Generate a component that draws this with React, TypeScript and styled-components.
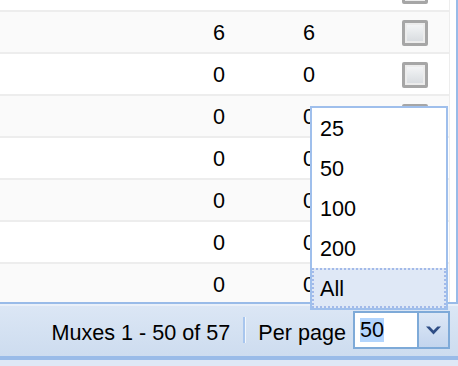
import React from 'react';
import styled, { createGlobalStyle } from 'styled-components';

const GlobalStyle = createGlobalStyle`
  html, body {
    margin: 0;
    padding: 0;
    background: #ffffff;
  }
  body {
    width: 458px;
    height: 366px;
    overflow: hidden;
    font-family: 'Liberation Sans', Arial, sans-serif;
    font-size: 21.6px;
    color: #000;
  }
`;

interface muxRowType {
  id: number;
  services: string;
  channels: string;
}

// first row is scrolled out of view, only its checkbox bottom shows
const rows: muxRowType[] = [
  { id: 0, services: '', channels: '' },
  { id: 1, services: '6', channels: '6' },
  { id: 2, services: '0', channels: '0' },
  { id: 3, services: '0', channels: '0' },
  { id: 4, services: '0', channels: '0' },
  { id: 5, services: '0', channels: '0' },
  { id: 6, services: '0', channels: '0' },
  { id: 7, services: '0', channels: '0' },
];

const pageSizes = ['25', '50', '100', '200', 'All'];

const App = () => {
  return (
    <>
      <GlobalStyle />
      <Page>
        <GridBody>
          <GridScroller>
            {rows.map((row, i) => (
              <Row key={row.id} $alt={i % 2 === 1}>
                <NumberCell>{row.services}</NumberCell>
                <NumberCell $wide>{row.channels}</NumberCell>
                <CheckCell>
                  <CheckBox />
                </CheckCell>
              </Row>
            ))}
          </GridScroller>
        </GridBody>
        <PagingBar>
          <BarText>Muxes 1 - 50 of 57</BarText>
          <Separator />
          <BarText>Per page</BarText>
          <Combo>
            <ComboInput>
              <Selected>50</Selected>
            </ComboInput>
            <Trigger>
              <svg width="15" height="9" viewBox="0 0 15 9">
                <polygon
                  points="0,0.5 3.6,0.5 7.5,4.4 11.4,0.5 15,0.5 7.5,8.5"
                  fill="#2e4d85"
                />
              </svg>
            </Trigger>
          </Combo>
        </PagingBar>
        <BottomStrip />
        <ListBox>
          {pageSizes.map((size) => (
            <ListItem key={size} $active={size === 'All'}>
              {size}
            </ListItem>
          ))}
        </ListBox>
      </Page>
    </>
  );
};

export default App;

const Page = styled.div`
  position: relative;
  width: 458px;
  height: 366px;
  display: flex;
  flex-direction: column;
  overflow: hidden;
`;

const GridBody = styled.div`
  height: 302px;
  box-sizing: border-box;
  border-right: 2px solid #99bbe8;
  overflow: hidden;
  background: #fff;
`;

const GridScroller = styled.div`
  margin-top: -30px;
`;

const Row = styled.div<{ $alt?: boolean }>`
  width: 450px;
  height: 42px;
  box-sizing: border-box;
  display: flex;
  align-items: center;
  padding-left: 213px;
  background: ${(p) => (p.$alt ? '#fafafa' : '#ffffff')};
  border-bottom: 2px solid #ededed;
  border-right: 1px solid #ededed;
`;

const NumberCell = styled.div<{ $wide?: boolean }>`
  width: ${(p) => (p.$wide ? '99px' : '90px')};
  line-height: 40px;
  padding-top: 2px;
`;

const CheckCell = styled.div`
  display: flex;
  align-items: center;
  height: 40px;
  padding-top: 1px;
`;

const CheckBox = styled.span`
  display: block;
  width: 26px;
  height: 26px;
  box-sizing: border-box;
  border: 3px solid #a6a6a6;
  border-radius: 2px;
  background: linear-gradient(#f6f7f8, #d6dade);
  box-shadow: inset 0 0 0 2px #ececec;
`;

const PagingBar = styled.div`
  height: 58px;
  box-sizing: border-box;
  display: flex;
  align-items: center;
  justify-content: flex-end;
  padding-right: 8px;
  border-top: 2px solid #99bbe8;
  border-bottom: 4px solid #99bbe8;
  background: linear-gradient(#dce7f5, #cddcef);
  box-shadow: inset 0 2px 0 #e9f0f9;
`;

const BarText = styled.span`
  white-space: nowrap;
  padding-top: 5px;
`;

const Separator = styled.span`
  width: 2px;
  height: 26px;
  margin: 0 12px 0 13px;
  background: #a8c6ee;
  border-right: 1px solid #f1f6fc;
`;

const Combo = styled.div`
  display: flex;
  height: 38px;
  margin-left: 7px;
`;

const ComboInput = styled.div`
  width: 64px;
  box-sizing: border-box;
  display: flex;
  align-items: center;
  padding-left: 5px;
  background: #fff;
  border: 2px solid #7eaad8;
  border-right: none;
`;

const Selected = styled.span`
  background: #b3d5fd;
  line-height: 24px;
`;

const Trigger = styled.div`
  width: 33px;
  box-sizing: border-box;
  display: flex;
  align-items: center;
  justify-content: center;
  border: 2px solid #7eaad8;
  background: linear-gradient(#dde8f6, #c3d5ee);
`;

const BottomStrip = styled.div`
  flex: 1;
  background: #dfe8f6;
`;

const ListBox = styled.div`
  position: absolute;
  left: 310px;
  top: 106px;
  width: 138px;
  box-sizing: border-box;
  background: #fff;
  border: 2px solid #9fbfec;
`;

const ListItem = styled.div<{ $active?: boolean }>`
  height: 40px;
  box-sizing: border-box;
  display: flex;
  align-items: center;
  padding: 2px 0 0 6px;
  background: ${(p) => (p.$active ? '#dfe8f6' : '#ffffff')};
  border: 2px dotted ${(p) => (p.$active ? '#a3bae9' : 'transparent')};
`;
